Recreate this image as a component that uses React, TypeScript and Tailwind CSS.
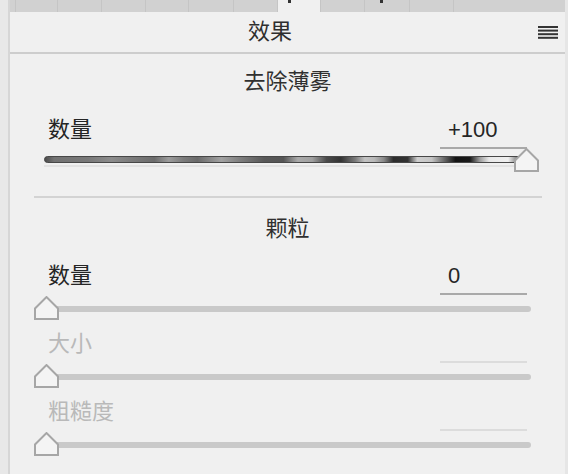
import React from "react";

const FONT = "font-['Liberation_Sans','Noto_Sans_CJK_SC',sans-serif]";

// Tab strip segments [width, active]
const TABS: { w: number; active?: boolean; mark?: boolean }[] = [
  { w: 5 },
  { w: 42 },
  { w: 44 },
  { w: 44 },
  { w: 43 },
  { w: 45 },
  { w: 44 },
  { w: 43, active: true, mark: true },
  { w: 44 },
  { w: 45, mark: true },
  { w: 44 },
  { w: 112 },
];

function Thumb({ className }: { className?: string }) {
  return (
    <svg width="25" height="24" viewBox="0 0 25 24" className={className}>
      <path
        d="M1 23V12.5L12.5 1L24 12.5V23Z"
        fill="#f4f4f4"
        stroke="#a6a6a6"
        strokeWidth="2"
      />
    </svg>
  );
}

function DehazeTrack() {
  const stops: [number, string][] = [
    [0, "#4a4a4a"],
    [0.02, "#727272"],
    [0.09, "#787878"],
    [0.14, "#8c8c8c"],
    [0.18, "#7c7c7c"],
    [0.23, "#6c6c6c"],
    [0.26, "#9c9c9c"],
    [0.29, "#7c7c7c"],
    [0.32, "#6a6a6a"],
    [0.37, "#a2a2a2"],
    [0.41, "#7e7e7e"],
    [0.46, "#585858"],
    [0.5, "#555555"],
    [0.53, "#aaaaaa"],
    [0.56, "#a0a0a0"],
    [0.59, "#4a4a4a"],
    [0.62, "#333333"],
    [0.65, "#7a7a7a"],
    [0.67, "#c2c2c2"],
    [0.69, "#b8b8b8"],
    [0.71, "#888888"],
    [0.73, "#2c2c2c"],
    [0.76, "#333333"],
    [0.78, "#cfcfcf"],
    [0.81, "#c4c4c4"],
    [0.84, "#5a5a5a"],
    [0.86, "#141414"],
    [0.89, "#1a1a1a"],
    [0.91, "#9a9a9a"],
    [0.93, "#e8e8e8"],
    [0.97, "#f0f0f0"],
    [0.99, "#777777"],
    [1, "#444444"],
  ];
  return (
    <svg width="479" height="7" viewBox="0 0 479 7" className="block">
      <defs>
        <linearGradient id="dehazeFill" x1="0" x2="1" y1="0" y2="0">
          {stops.map(([o, c]) => (
            <stop key={o} offset={o} stopColor={c} />
          ))}
        </linearGradient>
      </defs>
      <rect x="0.5" y="0.5" width="478" height="6" rx="3" fill="url(#dehazeFill)" stroke="#474747" strokeWidth="1" />
    </svg>
  );
}

function LabelRow({ label, value, disabled }: { label: string; value?: string; disabled?: boolean }) {
  return (
    <div className="flex h-[33px] items-start justify-between pl-[38px] pr-[38px]">
      <span className={`text-[22px] leading-[28px] ${disabled ? "text-[#b9b9b9]" : "text-[#252525]"}`}>{label}</span>
      <div
        className={`h-[33px] w-[87px] border-b-2 pl-[8px] text-[22px] leading-[28px] text-[#252525] ${
          disabled ? "border-[#dcdcdc]" : "border-[#a9a9a9]"
        }`}
      >
        {value}
      </div>
    </div>
  );
}

function PlainSlider() {
  return (
    <div className="relative h-[23px]">
      <div className="ml-[34px] mt-[11px] h-[6px] w-[487px] rounded-full bg-[#c9c9c9]" />
      <Thumb className="absolute left-[24px] top-[1px]" />
    </div>
  );
}

export default function App() {
  return (
    <div className={`flex h-[474px] w-[568px] overflow-hidden bg-[#f0f0f0] ${FONT}`}>
      <div className="w-[10px] shrink-0 border-r-2 border-[#d6d6d6] bg-[#e8e8e8]" />
      <div className="flex w-[555px] shrink-0 flex-col">
        {/* tab strip */}
        <div className="flex h-[12px] bg-[#d1d1d1]">
          {TABS.map((t, i) => (
            <div
              key={i}
              style={{ width: t.w }}
              className={`relative h-full ${i > 0 ? "border-l border-[#c5c5c5]" : ""} ${
                t.active ? "bg-[#f0f0f0]" : ""
              }`}
            >
              {t.mark && <div className={`absolute top-0 h-[3px] w-[3px] bg-[#333] ${t.active ? "left-[10px]" : "left-[15px]"}`} />}
            </div>
          ))}
        </div>

        {/* panel header */}
        <div className="relative flex h-[42px] items-center justify-center border-b-2 border-[#cdcdcd] pr-[35px]">
          <span className="text-[22px] leading-[28px] text-[#2e2e2e]">效果</span>
          <svg width="20" height="13" viewBox="0 0 20 13" className="absolute right-[7px] top-[14px]">
            <rect x="0" y="0" width="20" height="2" fill="#333" />
            <rect x="0" y="3.6" width="20" height="2" fill="#333" />
            <rect x="0" y="7.2" width="20" height="2" fill="#333" />
            <rect x="0" y="10.8" width="20" height="2" fill="#333" />
          </svg>
        </div>

        {/* dehaze */}
        <div className="mt-[14px] h-[28px] text-center text-[22px] leading-[28px] text-[#303030]">去除薄雾</div>
        <div className="mt-[20px]">
          <LabelRow label="数量" value="+100" />
        </div>
        <div className="relative h-[22px]">
          <div className="ml-[34px] mt-[7px] w-[479px]">
            <DehazeTrack />
          </div>
          <div className="ml-[34px] mt-[2px] h-[2px] w-[479px] bg-[#e2e2e2]" />
          <Thumb className="absolute left-[504px] top-[-1px]" />
        </div>

        <div className="ml-[24px] mt-[25px] h-[2px] w-[508px] bg-[#d3d3d3]" />

        {/* grain */}
        <div className="mt-[17px] h-[28px] text-center text-[22px] leading-[28px] text-[#303030]">颗粒</div>
        <div className="mt-[19px]">
          <LabelRow label="数量" value="0" />
        </div>
        <PlainSlider />
        <div className="mt-[12px]">
          <LabelRow label="大小" disabled />
        </div>
        <PlainSlider />
        <div className="mt-[12px]">
          <LabelRow label="粗糙度" disabled />
        </div>
        <PlainSlider />
      </div>
      <div className="flex-1 bg-[#e6e6e6]" />
    </div>
  );
}
